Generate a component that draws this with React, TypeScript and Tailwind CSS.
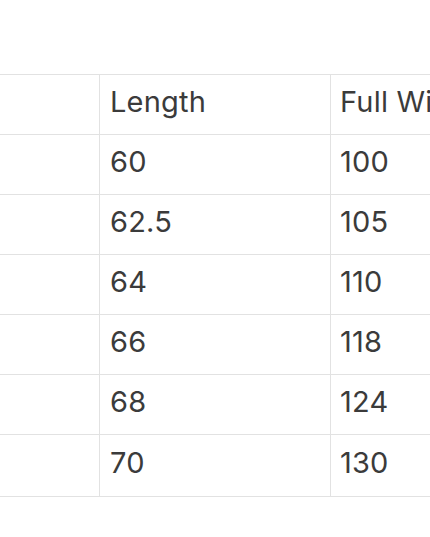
const rows = [
  ['', 'Length', 'Full Width'],
  ['', '60', '100'],
  ['', '62.5', '105'],
  ['', '64', '110'],
  ['', '66', '118'],
  ['', '68', '124'],
  ['', '70', '130'],
]

export default function App() {
  return (
    <div className="w-[430px] h-[537px] overflow-hidden bg-white font-['Inter',sans-serif] text-[#3b3b3b]">
      <div className="mt-[74px] w-[600px] border-t border-[#e2e2e2]">
        {rows.map((r, i) => (
          <div
            key={i}
            className={`flex border-b border-[#e2e2e2] ${i === rows.length - 1 ? 'h-[62px]' : 'h-[60px]'}`}
          >
            <div className="w-[100px] shrink-0 border-r border-[#e2e2e2]">{r[0]}</div>
            <div className="w-[231px] shrink-0 border-r border-[#e2e2e2] flex items-center pl-[10px] pb-[6px] text-[29px] tracking-[0.2px]">
              {r[1]}
            </div>
            <div className="flex-1 flex items-center pl-[9px] pb-[6px] text-[29px] tracking-[0.2px] whitespace-nowrap">{r[2]}</div>
          </div>
        ))}
      </div>
    </div>
  )
}
